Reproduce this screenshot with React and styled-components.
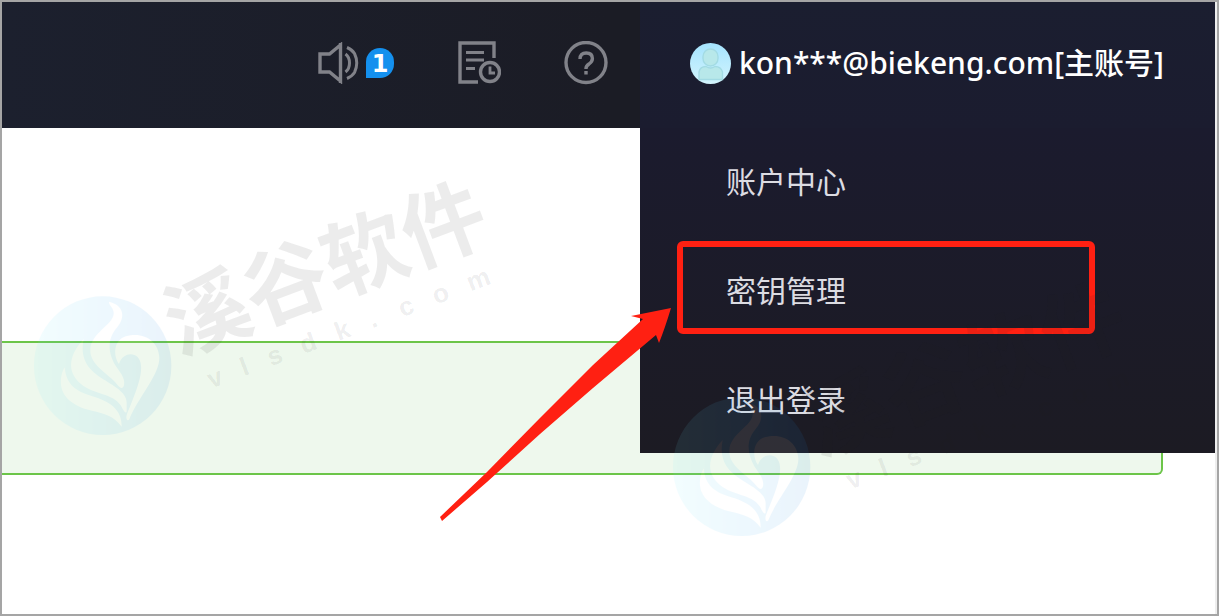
import styled, { createGlobalStyle } from "styled-components";

const GlobalStyle = createGlobalStyle`
  * {
    box-sizing: border-box;
  }

  body {
    margin: 0;
    background-color: #fff;
    font-family: "Noto Sans", "Noto Sans CJK SC", sans-serif;
  }
`;

// Page Container
const Page = styled.div`
  position: relative;
  min-height: 100vh;
  border: 2px #a5a5a5 solid;
  overflow: hidden;
`;

const Content = styled.div`
  min-height: calc(100vh - 4px);
  border-right: 2px #eee solid;
`;

// Top bar
const TopBar = styled.header`
  height: 126px;
  display: flex;
  background: linear-gradient(to right, #1c202e, #1b1c25 50%);
`;

const Actions = styled.nav`
  flex: 1;
  display: flex;
  align-items: center;
  justify-content: flex-end;
  gap: 63px;
  padding: 0 32px 4px 0;
`;

const IconButton = styled.button`
  display: flex;
  align-items: center;
  gap: 6px;
  padding: 0;
  border: none;
  background: none;
  color: #818289;
  cursor: pointer;

  svg {
    display: block;
    fill: none;
    stroke: currentColor;
    stroke-width: 3.4;
  }
`;

const Badge = styled.span`
  width: 28px;
  height: 30px;
  border-radius: 14px 14px 14px 0;
  background-color: #1490ee;
  color: #fff;
  font-family: "DejaVu Sans", sans-serif;
  font-size: 24px;
  font-weight: 700;
  line-height: 32px;
  text-align: center;
`;

// Account area with its drop-down
const Account = styled.div`
  position: relative;
  flex: 0 0 575px;
  background: linear-gradient(#1b1e30, #1b1c2f);
`;

const AccountButton = styled.button`
  width: 100%;
  height: 100%;
  display: flex;
  align-items: center;
  gap: 8px;
  padding: 0 0 4px 50px;
  border: none;
  background: none;
  color: #fff;
  font-family: inherit;
  font-size: 30px;
  font-weight: 500;
  line-height: 40px;
  white-space: nowrap;
  cursor: pointer;
`;

const Menu = styled.ul`
  position: absolute;
  top: 100%;
  left: 0;
  width: 100%;
  display: flex;
  flex-direction: column;
  gap: 5px;
  margin: 0;
  padding: 2px 0 1px;
  list-style: none;
  background: linear-gradient(#1b1b2e, #1c1b23);
`;

const MenuItem = styled.li`
  position: relative;
`;

const MenuLink = styled.a`
  display: flex;
  align-items: center;
  height: 104px;
  padding: 0 0 5px 86px;
  color: #dcdce2;
  font-size: 30px;
  text-decoration: none;
`;

const Highlight = styled.span`
  position: absolute;
  top: 2px;
  left: 37px;
  width: 418px;
  height: 93px;
  border: 6px #ff2012 solid;
  border-radius: 6px;
  pointer-events: none;
`;

const Arrow = styled.svg`
  position: absolute;
  top: 296px;
  left: -210px;
  pointer-events: none;
`;

const Notice = styled.section`
  height: 134px;
  margin: 213px 52px 0 0;
  border: 2px #6cc549 solid;
  border-left: none;
  border-radius: 0 6px 6px 0;
  background-color: #eef8ed;
`;

const WatermarkLayer = styled.svg`
  position: absolute;
  top: -2px;
  left: -2px;
  width: 100%;
  height: 100%;
  overflow: visible;
  pointer-events: none;
`;

const items = [
  { label: "账户中心" },
  { label: "密钥管理", marked: true },
  { label: "退出登录" },
];

const SpeakerIcon = () => (
  <svg width="42" height="42" viewBox="0 0 42 42">
    <path d="M2 12h9.5l11-9v36l-11-9H2z M22.5 1v40" />
    <path d="M27.5 12q4 3 4 9t-4 9" strokeWidth="3" />
    <path d="M29 5.5q5 2 7.5 6q4.5 9.5 0 19q-2.5 4-7.5 6" strokeWidth="3" />
  </svg>
);

const NotesIcon = () => (
  <svg width="44" height="44" viewBox="0 0 44 44">
    <path d="M37 17V2H3v39h18" />
    <path d="M9 11.5h18 M9 19h18 M9 27.5h9" strokeWidth="2.8" />
    <circle cx="33" cy="31" r="9.5" />
    <path d="M33 25.5v6.5h5" strokeWidth="2.8" />
  </svg>
);

const HelpIcon = () => (
  <svg width="44" height="44" viewBox="0 0 44 44">
    <circle cx="22" cy="21.5" r="20" />
    <path d="M16 18q0-6 6.2-6t6.2 5.5q0 3-3.4 5.5q-3 2-3 4.5v.5 M22 30v3.5" />
  </svg>
);

const Avatar = () => (
  <svg width="41" height="41" viewBox="0 0 41 41">
    <defs>
      <linearGradient id="avatarBg" x2="0" y2="1">
        <stop offset="0" stopColor="#a5e4fe" />
        <stop offset="1" stopColor="#d3f4fd" />
      </linearGradient>
    </defs>
    <circle cx="20.5" cy="20.5" r="20.5" fill="url(#avatarBg)" />
    <g fill="#b8e8ea" stroke="#a3dbe4" strokeWidth="1.4">
      <rect x="13" y="6" width="15" height="17" rx="7.5" />
      <path d="M9 36.5V29q1-5.5 7-5.5q4.5 3 9 0q6 0 7.5 5.5v7.5z" />
    </g>
  </svg>
);

const letterStops = "0 35 64 99 136 172 204 240 277";

function Watermark({ x, y }) {
  return (
    <g transform={`translate(${x} ${y})`}>
      <g opacity=".085" transform="scale(.33333)">
        <ellipse cx="218" cy="227" rx="206" ry="208" fill="url(#markBg)" />
        <g fill="#fff">
          <path d="M237 35C282 45 288 82 260 114C228 151 237 192 256 226C267 244 287 263 282 286C278 300 269 292 262 284C236 251 178 226 181 178C183 128 249 105 251 71C252 53 236 47 237 35Z" />
          <path d="M161 147C150 202 170 235 213 263C248 286 291 306 290 338V365C286 374 279 358 272 346C248 309 192 315 153 282C105 242 121 190 161 147Z" />
          <path d="M104 232C109 286 139 304 187 319C238 334 276 358 275 410C251 376 223 371 186 362C142 353 98 328 93 285C91 263 96 245 104 232Z" />
          <path d="M267 222C250 199 249 151 287 139C340 123 386 153 388 202C390 254 323 324 298 388C292 396 286 386 291 372C308 329 337 265 333 227C331 183 279 181 267 222Z" />
        </g>
      </g>
      <g
        transform="translate(177 19) rotate(-20.5)"
        fill="#1e1e22"
        fillOpacity=".085"
      >
        <text
          x="-43"
          y="34"
          fontSize="84"
          fontWeight="700"
          fontFamily='"Noto Sans CJK SC", sans-serif'
        >
          溪谷软件
        </text>
        <text
          transform="translate(-24 76)"
          x={letterStops}
          fontSize="26"
          fontWeight="700"
          fontFamily='"Liberation Sans", sans-serif'
        >
          vlsdk.com
        </text>
      </g>
    </g>
  );
}

export default function App() {
  return (
    <Page>
      <GlobalStyle />
      <Content>
        <TopBar>
          <Actions>
            <IconButton aria-label="消息">
              <SpeakerIcon />
              <Badge>1</Badge>
            </IconButton>
            <IconButton aria-label="工单">
              <NotesIcon />
            </IconButton>
            <IconButton aria-label="帮助">
              <HelpIcon />
            </IconButton>
          </Actions>
          <Account>
            <AccountButton>
              <Avatar />
              <span>kon***@biekeng.com[主账号]</span>
            </AccountButton>
            <Menu>
              {items.map((item) => (
                <MenuItem key={item.label}>
                  <MenuLink href="#">{item.label}</MenuLink>
                  {item.marked && <Highlight />}
                </MenuItem>
              ))}
            </Menu>
            <Arrow width="250" height="230" viewBox="0 0 250 230" aria-hidden="true">
              <path
                fill="#ff2012"
                d="M241 10L201 18L213 21L163 67L110 120L57 174L10 219L12 223L57 184L110 136L163 90L226 37L229 45Q235 30 241 10Z"
              />
            </Arrow>
          </Account>
        </TopBar>
        <Notice />
      </Content>
      <WatermarkLayer aria-hidden="true">
        <defs>
          <linearGradient id="markBg">
            <stop offset="0" stopColor="#77f0ff" />
            <stop offset=".5" stopColor="#40b8fa" />
            <stop offset="1" stopColor="#1c84de" />
          </linearGradient>
        </defs>
        <Watermark x={30} y={290} />
        <Watermark x={669} y={391} />
      </WatermarkLayer>
    </Page>
  );
}
